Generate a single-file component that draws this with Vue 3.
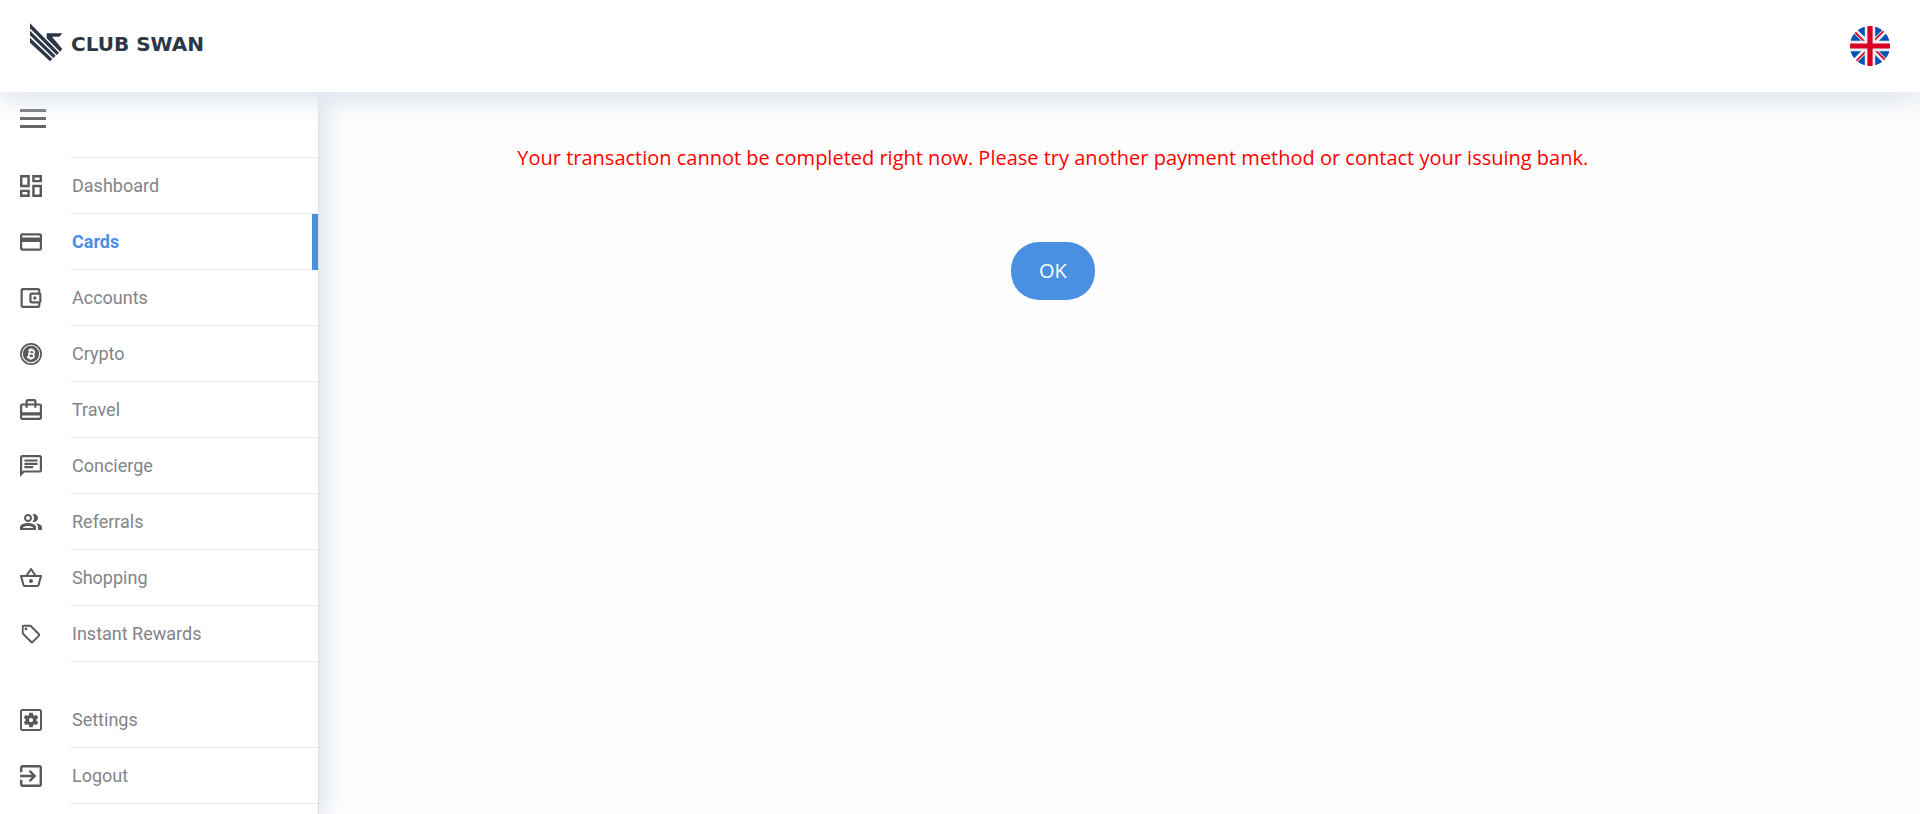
<script setup>
import { ref } from 'vue'

const active = ref('Cards')

const groups = [
  [
    { label: 'Dashboard', box: '3 3 18 18', path: 'M19 5v2h-4V5h4M9 5v6H5V5h4m10 8v6h-4v-6h4M9 17v2H5v-2h4M21 3h-8v6h8V3zM11 3H3v10h8V3zm10 8h-8v10h8V11zm-10 4H3v6h8v-6z' },
    { label: 'Cards', box: '2 2 20 20', path: 'M20 4H4c-1.11 0-1.99.89-1.99 2L2 18c0 1.11.89 2 2 2h16c1.11 0 2-.89 2-2V6c0-1.11-.89-2-2-2zm0 14H4v-6h16v6zm0-10H4V6h16v2z' },
    { label: 'Accounts', box: '3 2 19 20', path: 'M21 7.28V5c0-1.1-.9-2-2-2H5c-1.11 0-2 .9-2 2v14c0 1.1.89 2 2 2h14c1.1 0 2-.9 2-2v-2.28c.59-.35 1-.98 1-1.72V9c0-.74-.41-1.37-1-1.72zM20 9v6h-7V9h7zM5 19V5h14v2h-6c-1.1 0-2 .9-2 2v6c0 1.1.9 2 2 2h6v2H5zM16 10.5a1.5 1.5 0 1 0 0 3 1.5 1.5 0 0 0 0-3z' },
    { label: 'Crypto', box: '0 0 22 22', coin: true },
    { label: 'Travel', box: '2 2 20 20', path: 'M20 6h-3V4c0-1.11-.89-2-2-2H9c-1.11 0-2 .89-2 2v2H4c-1.11 0-2 .89-2 2v11c0 1.11.89 2 2 2h16c1.11 0 2-.89 2-2V8c0-1.11-.89-2-2-2zM9 4h6v2H9V4zm11 15H4v-2h16v2zm0-5H4V8h3v2h2V8h6v2h2V8h3v6z' },
    { label: 'Concierge', box: '2 2 20 20', path: 'M4 4h16v12H5.17L4 17.17V4m0-2c-1.1 0-1.99.9-1.99 2L2 22l4-4h14c1.1 0 2-.9 2-2V4c0-1.1-.9-2-2-2H4zm2 10h8v2H6v-2zm0-3h12v2H6V9zm0-3h12v2H6V6z' },
    { label: 'Referrals', box: '1 1 22 22', path: 'M16.67 13.13C18.04 14.06 19 15.32 19 17v3h4v-3c0-2.18-3.57-3.47-6.33-3.87zM9 12c2.21 0 4-1.79 4-4s-1.79-4-4-4-4 1.79-4 4 1.79 4 4 4zm0-6c1.1 0 2 .9 2 2s-.9 2-2 2-2-.9-2-2 .9-2 2-2zM15 12c2.21 0 4-1.79 4-4s-1.79-4-4-4c-.47 0-.91.1-1.33.24C14.5 5.27 15 6.58 15 8s-.5 2.73-1.33 3.76c.42.14.86.24 1.33.24zM9 13c-2.67 0-8 1.34-8 4v3h16v-3c0-2.66-5.33-4-8-4zm5 5H4v-.6C5 16.6 7 16 9 16s4 .6 5 1.4v.6z' },
    { label: 'Shopping', box: '1 1 22 22', path: 'M22 9h-4.79l-4.38-6.56c-.19-.28-.51-.42-.83-.42s-.64.14-.83.43L6.79 9H2c-.55 0-1 .45-1 1 0 .09.01.18.04.27l2.54 9.27c.23.84 1 1.46 1.92 1.46h13c.92 0 1.69-.62 1.93-1.46l2.54-9.27L23 10c0-.55-.45-1-1-1zM12 4.8L14.8 9H9.2L12 4.8zM18.5 19l-12.99.01L3.31 11H20.7l-2.2 8zM12 13c-1.1 0-2 .9-2 2s.9 2 2 2 2-.9 2-2-.9-2-2-2z' },
    { label: 'Instant Rewards', box: '0 0 24 24', path: 'M21.41 11.58l-9-9C12.05 2.22 11.55 2 11 2H4c-1.1 0-2 .9-2 2v7c0 .55.22 1.05.59 1.42l9 9c.36.36.86.58 1.41.58s1.05-.22 1.41-.59l7-7c.37-.36.59-.86.59-1.41s-.23-1.06-.59-1.42zM13 20.01L4 11V4h7v-.01l9 9-7 7.02zM6.5 5a1.5 1.5 0 1 0 0 3 1.5 1.5 0 0 0 0-3z' },
  ],
  [
    { label: 'Settings', box: '3 3 18 18', path: 'M19 3H5c-1.1 0-2 .9-2 2v14c0 1.1.9 2 2 2h14c1.1 0 2-.9 2-2V5c0-1.1-.9-2-2-2zm0 16.4H5c-.2 0-.4-.2-.4-.4V5c0-.2.2-.4.4-.4h14c.2 0 .4.2.4.4v14c0 .2-.2.4-.4.4zM6.21 13.97l1.2 2.07c.08.13.23.18.37.13l1.49-.6c.31.24.64.44 1.01.59l.22 1.59c.03.14.15.25.3.25h2.4c.15 0 .27-.11.3-.26l.22-1.59c.36-.15.7-.35 1.01-.59l1.49.6c.14.05.29 0 .37-.13l1.2-2.07c.08-.13.04-.29-.07-.39l-1.27-.99c.03-.19.04-.39.04-.58 0-.2-.02-.39-.04-.59l1.27-.99c.11-.09.15-.26.07-.39l-1.2-2.07c-.08-.13-.23-.18-.37-.13l-1.49.6c-.31-.24-.64-.44-1.01-.59l-.22-1.59c-.03-.14-.15-.25-.3-.25h-2.4c-.15 0-.27.11-.3.26l-.22 1.59c-.36.15-.71.34-1.01.58l-1.49-.6c-.14-.05-.29 0-.37.13l-1.2 2.07c-.08.13-.04.29.07.39l1.27.99c-.03.2-.05.39-.05.59 0 .2.02.39.04.59l-1.27.99c-.11.1-.14.26-.06.39zM12 10.29c.94 0 1.71.77 1.71 1.71s-.77 1.71-1.71 1.71-1.71-.77-1.71-1.71.77-1.71 1.71-1.71z' },
    { label: 'Logout', box: '3 3 18 18', path: 'M10.09 15.59L11.5 17l5-5-5-5-1.41 1.41L12.67 11H3v2h9.67l-2.58 2.59zM19 3H5c-1.11 0-2 .9-2 2v4h2V5h14v14H5v-4H3v4c0 1.1.89 2 2 2h14c1.1 0 2-.9 2-2V5c0-1.1-.9-2-2-2z' },
  ],
]
</script>

<template>
  <div class="app">
    <header class="topbar">
      <a class="brand" href="#">
        <svg class="mark" viewBox="90 68 99 117" aria-hidden="true">
          <path d="M140 99H187L178 109H156L187 146 180 154 140 114Z" />
          <path d="M90 69L177 157 170 164 90 84Z" />
          <path d="M90 91L167 166 160 173 90 105Z" />
          <path d="M90 112L157 176 150 183 90 127Z" />
        </svg>
        <span class="brand-name">CLUB SWAN</span>
      </a>
      <button class="language" type="button" aria-label="English">
        <svg viewBox="0 0 512 512" aria-hidden="true">
          <circle cx="256" cy="256" r="256" fill="#f0f0f0" />
          <path fill="#0052b4" d="M52.92 100.142c-20.109 26.163-35.272 56.318-44.101 89.077h133.178zM503.181 189.219c-8.829-32.758-23.993-62.913-44.101-89.076l-89.075 89.076zM8.819 322.784c8.83 32.758 23.993 62.913 44.101 89.075l89.074-89.075zM411.858 52.921c-26.163-20.109-56.317-35.272-89.076-44.102v133.177zM100.142 459.079c26.163 20.109 56.318 35.272 89.076 44.102V370.005zM189.217 8.819c-32.758 8.83-62.913 23.993-89.075 44.101l89.075 89.075zM322.783 503.181c32.758-8.83 62.913-23.993 89.075-44.101l-89.075-89.075zM370.005 322.784l89.075 89.076c20.108-26.162 35.272-56.318 44.101-89.076z" />
          <path fill="#d80027" d="M509.833 222.609H289.392V2.167C278.461.744 267.317 0 256 0c-11.319 0-22.461.744-33.391 2.167v220.442H2.167C.744 233.539 0 244.683 0 256c0 11.319.744 22.461 2.167 33.391h220.442v220.442C233.539 511.256 244.681 512 256 512c11.317 0 22.461-.743 33.391-2.167V289.392h220.442C511.256 278.461 512 267.319 512 256c0-11.317-.744-22.461-2.167-33.391z" />
          <path fill="#d80027" d="M322.783 322.784L437.019 437.02c5.254-5.252 10.266-10.743 15.048-16.435l-97.802-97.802h-31.482zM189.217 322.784L74.98 437.019c5.252 5.254 10.743 10.266 16.435 15.048l97.802-97.804zM189.217 189.219L74.981 74.98c-5.254 5.252-10.266 10.743-15.048 16.435l97.803 97.803zM322.783 189.219L437.02 74.981c-5.252-5.254-10.743-10.266-16.435-15.047l-97.802 97.803z" />
        </svg>
      </button>
    </header>

    <div class="body">
      <aside class="sidebar">
        <button class="menu-toggle" type="button" aria-label="Toggle menu">
          <span></span><span></span><span></span>
        </button>
        <nav>
          <ul v-for="(items, g) in groups" :key="g" class="group">
            <li v-for="item in items" :key="item.label">
              <a href="#" class="item" :class="{ active: item.label === active }" @click.prevent="active = item.label">
                <svg class="icon" :viewBox="item.box" aria-hidden="true">
                  <template v-if="item.coin">
                    <circle class="ring" cx="11" cy="11" r="10.1" />
                    <circle cx="11" cy="11" r="8.2" />
                    <g class="coin-sign" transform="rotate(12 11 11)">
                      <path d="M7.6 7.2H12C14.6 7.2 14.6 10.8 12 10.8H9.3M12 10.8C15.1 10.8 15.1 14.8 12 14.8H7.6M9.2 7.2V14.8" />
                      <path class="ticks" d="M10 5.2V7M12 5.2V7M10 15V16.8M12 15V16.8" />
                    </g>
                  </template>
                  <path v-else :d="item.path" />
                </svg>
                <span class="label">{{ item.label }}</span>
              </a>
            </li>
          </ul>
        </nav>
      </aside>

      <main class="content">
        <div class="notice">
          <p class="message" role="alert">Your transaction cannot be completed right now. Please try another payment method or contact your issuing bank.</p>
          <button class="ok" type="button">OK</button>
        </div>
      </main>
    </div>
  </div>
</template>

<style>
body {
  background: #fdfdfd;
}
</style>

<style scoped>
.app {
  display: flex;
  flex-direction: column;
  min-height: 100vh;
  font-family: Roboto, "Liberation Sans", sans-serif;
  overflow: hidden;
}
.topbar {
  position: relative;
  z-index: 2;
  display: flex;
  align-items: center;
  justify-content: space-between;
  box-sizing: border-box;
  height: 92px;
  padding: 0 30px;
  background: #fff;
  box-shadow: 0 10px 24px #dfe6ee;
}
.brand {
  display: flex;
  align-items: center;
  gap: 8px;
  padding-bottom: 8px;
  color: #2b3648;
  text-decoration: none;
}
.mark {
  width: 33px;
  height: 39px;
  fill: currentColor;
}
.brand-name {
  padding-top: 3px;
  font: 700 20px/24px "DejaVu Sans", sans-serif;
}
.language {
  width: 40px;
  height: 40px;
  padding: 0;
  border: 0;
  background: none;
  cursor: pointer;
}
.language svg {
  display: block;
}
.body {
  display: flex;
  flex: 1;
}
.sidebar {
  position: relative;
  z-index: 1;
  flex: none;
  box-sizing: border-box;
  width: 319px;
  padding-bottom: 8px;
  border-right: 1px solid #dcdfe4;
  background: #fff;
  box-shadow: 8px 0 20px #dfe6ee;
}
.menu-toggle {
  display: flex;
  flex-direction: column;
  gap: 5px;
  box-sizing: content-box;
  width: 26px;
  padding: 17px 20px 30px;
  border: 0;
  background: none;
  cursor: pointer;
}
.menu-toggle span {
  height: 3px;
  background: #636363;
}
.group {
  margin: 0;
  padding: 0;
  list-style: none;
}
.group + .group {
  margin-top: 30px;
}
.item {
  display: flex;
  align-items: stretch;
  height: 56px;
  padding-left: 20px;
  color: #828489;
  font-size: 18px;
  line-height: 55px;
  text-decoration: none;
}
.group:first-child li:first-child .label {
  box-shadow: 0 -1px #ececec;
}
.icon {
  align-self: center;
  width: 22px;
  height: 22px;
  margin-right: 28px;
  fill: #595959;
}
.ring {
  fill: none;
  stroke: #595959;
  stroke-width: 1.7;
}
.coin-sign {
  fill: none;
  stroke: #fff;
  stroke-width: 1.7;
}
.ticks {
  stroke-width: 1.2;
}
.label {
  flex: 1;
  padding-left: 2px;
  border-bottom: 1px solid #ececec;
}
.active {
  border-right: 6px solid #4a90e2;
}
.active .label {
  color: #4a90e2;
  font-weight: 700;
}
.content {
  flex: 1;
  min-width: 0;
}
.notice {
  display: flex;
  flex-direction: column;
  align-items: center;
  gap: 68px;
  width: 91.666%;
  padding-top: 50px;
  font-family: "Open Sans", "Noto Sans", sans-serif;
}
.message {
  margin: 0;
  color: #f00;
  font-size: 20px;
  line-height: 32px;
  text-align: center;
}
.ok {
  padding: 14px 28px;
  border: 0;
  border-radius: 28px;
  background: #4a90e2;
  color: #fff;
  font-family: inherit;
  font-size: 20px;
  line-height: 30px;
  cursor: pointer;
}
</style>
